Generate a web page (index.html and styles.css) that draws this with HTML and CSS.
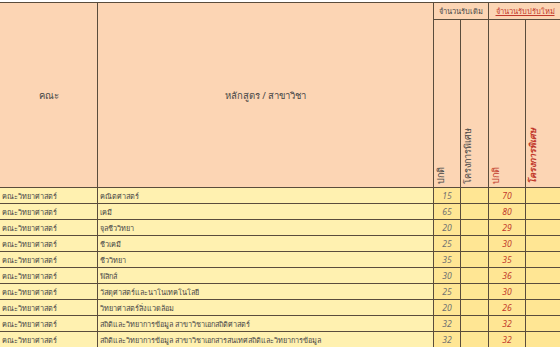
FILE: index.html
```html
<!DOCTYPE html>
<html lang="th">
<head>
<meta charset="utf-8">
<link rel="stylesheet" href="styles.css">
</head>
<body>
<table class="sheet">
  <colgroup>
    <col class="c-fac">
    <col class="c-prog">
    <col class="c-n">
    <col class="c-s">
    <col class="c-n2">
    <col class="c-s2">
  </colgroup>
  <thead>
    <tr class="h1">
      <th rowspan="2" class="hd-main">คณะ</th>
      <th rowspan="2" class="hd-main">หลักสูตร / สาขาวิชา</th>
      <th colspan="2" class="grp">จำนวนรับเดิม</th>
      <th colspan="2" class="grp red"><span class="u">จำนวนรับปรับใหม่</span></th>
    </tr>
    <tr class="h2">
      <th class="vert"><span>ปกติ</span></th>
      <th class="vert"><span>โครงการพิเศษ</span></th>
      <th class="vert red"><span>ปกติ</span></th>
      <th class="vert red bold"><span>โครงการพิเศษ</span></th>
    </tr>
  </thead>
  <tbody>
    <tr><td>คณะวิทยาศาสตร์</td><td>คณิตศาสตร์</td><td class="num">15</td><td class="num"></td><td class="num red">70</td><td class="num"></td></tr>
    <tr><td>คณะวิทยาศาสตร์</td><td>เคมี</td><td class="num">65</td><td class="num"></td><td class="num red">80</td><td class="num"></td></tr>
    <tr><td>คณะวิทยาศาสตร์</td><td>จุลชีววิทยา</td><td class="num">20</td><td class="num"></td><td class="num red">29</td><td class="num"></td></tr>
    <tr><td>คณะวิทยาศาสตร์</td><td>ชีวเคมี</td><td class="num">25</td><td class="num"></td><td class="num red">30</td><td class="num"></td></tr>
    <tr><td>คณะวิทยาศาสตร์</td><td>ชีววิทยา</td><td class="num">35</td><td class="num"></td><td class="num red">35</td><td class="num"></td></tr>
    <tr><td>คณะวิทยาศาสตร์</td><td>ฟิสิกส์</td><td class="num">30</td><td class="num"></td><td class="num red">36</td><td class="num"></td></tr>
    <tr><td>คณะวิทยาศาสตร์</td><td>วัสดุศาสตร์และนาโนเทคโนโลยี</td><td class="num">25</td><td class="num"></td><td class="num red">30</td><td class="num"></td></tr>
    <tr><td>คณะวิทยาศาสตร์</td><td>วิทยาศาสตร์สิ่งแวดล้อม</td><td class="num">20</td><td class="num"></td><td class="num red">26</td><td class="num"></td></tr>
    <tr><td>คณะวิทยาศาสตร์</td><td>สถิติและวิทยาการข้อมูล สาขาวิชาเอกสถิติศาสตร์</td><td class="num">32</td><td class="num"></td><td class="num red">32</td><td class="num"></td></tr>
    <tr><td>คณะวิทยาศาสตร์</td><td>สถิติและวิทยาการข้อมูล สาขาวิชาเอกสารสนเทศสถิติและวิทยาการข้อมูล</td><td class="num">32</td><td class="num"></td><td class="num red">32</td><td class="num"></td></tr>
  </tbody>
</table>
</body>
</html>
```
FILE: styles.css
```css
html, body {
  margin: 0;
  padding: 0;
  background: #ffffff;
  overflow: hidden;
}

body {
  padding-top: 2px;
}

.sheet {
  border-collapse: collapse;
  table-layout: fixed;
  width: 562px;
  margin-left: -1px;
  font-family: "Noto Sans", "Liberation Sans", sans-serif;
  font-size: 7.3px;
  color: #474747;
}

.c-fac { width: 98px; }
.c-prog { width: 336px; }
.c-n { width: 27px; }
.c-s { width: 28px; }
.c-n2 { width: 37px; }
.c-s2 { width: 36px; }

.sheet th,
.sheet td {
  border: 1px solid #5a4c3c;
  padding: 0;
  overflow: hidden;
  white-space: nowrap;
}

.sheet th {
  background: #fcd5b4;
  font-weight: normal;
}

.h1 { height: 17px; }
.h2 { height: 168px; }

.hd-main {
  text-align: center;
  vertical-align: middle;
  font-size: 9.5px;
}

.grp {
  font-size: 7.5px;
  text-align: center;
  vertical-align: middle;
}

.u {
  text-decoration: underline;
}

.vert {
  vertical-align: bottom;
  text-align: left;
}

.vert span {
  display: inline-block;
  writing-mode: vertical-rl;
  transform: rotate(180deg);
  font-size: 9px;
  line-height: 10px;
  margin-left: 2px;
  margin-bottom: 1px;
}

.red {
  color: #c23a2c;
}

.bold span {
  font-weight: bold;
  font-style: italic;
}

.sheet tbody tr {
  height: 16px;
}

.sheet td {
  background: #fff1b0;
  padding-left: 2px;
  line-height: 14px;
  vertical-align: middle;
}

.sheet td.num {
  background: #ffe694;
  text-align: center;
  font-style: italic;
  font-size: 8.6px;
  padding-left: 0;
  color: #707070;
}

.sheet td.num.red {
  color: #c23a2c;
}
```
